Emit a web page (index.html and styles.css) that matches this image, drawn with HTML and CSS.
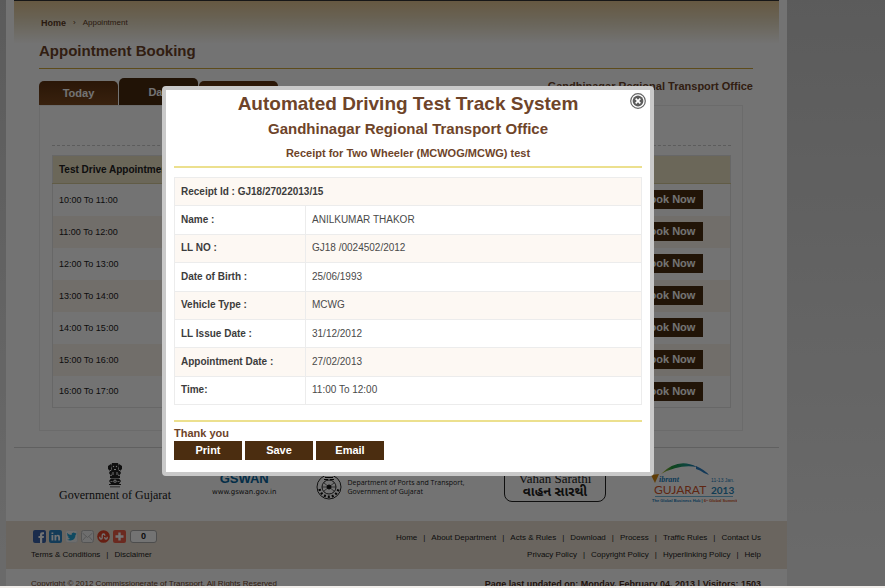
FILE: index.html
```html
<!DOCTYPE html>
<html lang="en">
<head>
<meta charset="utf-8">
<title>Appointment Booking</title>
<link rel="stylesheet" href="styles.css">
</head>
<body>
<div class="window">
  <div class="site">
    <header class="masthead">
      <nav class="breadcrumb" aria-label="Breadcrumb"><a class="home" href="#">Home</a><span>›</span><a href="#">Appointment</a></nav>
    </header>
    <main class="booking">
      <h1>Appointment Booking</h1>
      <div class="tabbar">
        <div class="tabs">
          <button class="tab" type="button">Today</button>
          <button class="tab active" type="button">Day</button>
          <button class="tab" type="button"></button>
        </div>
        <strong class="office">Gandhinagar Regional Transport Office</strong>
      </div>
      <section class="panel">
        <div class="filters"></div>
        <table class="slots">
          <thead><tr><th>Test Drive Appointment</th><th></th></tr></thead>
          <tbody>
            <tr><td>10:00 To 11:00</td><td class="act"><button class="btn" type="button">Book Now</button></td></tr>
            <tr><td>11:00 To 12:00</td><td class="act"><button class="btn" type="button">Book Now</button></td></tr>
            <tr><td>12:00 To 13:00</td><td class="act"><button class="btn" type="button">Book Now</button></td></tr>
            <tr><td>13:00 To 14:00</td><td class="act"><button class="btn" type="button">Book Now</button></td></tr>
            <tr><td>14:00 To 15:00</td><td class="act"><button class="btn" type="button">Book Now</button></td></tr>
            <tr><td>15:00 To 16:00</td><td class="act"><button class="btn" type="button">Book Now</button></td></tr>
            <tr><td>16:00 To 17:00</td><td class="act"><button class="btn" type="button">Book Now</button></td></tr>
          </tbody>
        </table>
      </section>
    </main>
    <section class="partners">
      <div class="gov">
        <svg width="18" height="26" viewBox="0 0 18 26" fill="#222">
          <path d="M6 1h6l1 3-1 3 1 3-1 4H6l-1-4 1-3-1-3z"/>
          <path d="M2 4l3-2v4l1 4-1 4-2-3 1-2-2-2zM16 4l-3-2v4l-1 4 1 4 2-3-1-2 2-2z"/>
          <path d="M4 14h10v2H4zM5 16.500h8l2 2.500-2 3H5l-2-3zM3 22h12v1H3zM4 24.500h10v.8H4z"/>
          <g fill="#fff"><circle cx="7.500" cy="4.500" r=".7"/><circle cx="10.500" cy="4.500" r=".7"/><path d="M8 7h2v1H8zM6.500 10h1v3h-1zM10.500 10h1v3h-1zM4 8h1v1H4zM13 8h1v1h-1z"/><circle cx="9" cy="19.200" r="1.600"/><path d="M4.500 19h2v.8h-2zM11.500 19h2v.8h-2z"/></g>
          <circle cx="9" cy="19.200" r=".7"/>
        </svg>
        <span>Government of Gujarat</span>
      </div>
      <div class="gswan"><b>GSWAN</b><span>www.gswan.gov.in</span></div>
      <div class="dept">
        <svg width="26" height="26" viewBox="0 0 26 26" fill="none" stroke="#111">
          <circle cx="13" cy="13" r="12" stroke-width=".9"/>
          <circle cx="13" cy="13" r="7" stroke-width=".9"/>
          <circle cx="13" cy="13" r="2" fill="#111"/>
          <path d="M6 13h14M8 9l10 8M18 9L8 17" stroke-width=".6"/>
          <path d="M3.500 15A9.700 9.700 0 0 0 22.500 15" stroke-width="2.400" stroke-dasharray="2 2"/>
          <path d="M8 5.500h4M14 5.500h4M9 3.500h8" stroke-width="1.200"/>
        </svg>
        <span>Department of Ports and Transport,<br>Government of Gujarat</span>
      </div>
      <div class="vahan"><span>Vahan Sarathi</span><b lang="gu">વાહન સારથી</b></div>
      <svg class="vibrant" width="88" height="44" viewBox="0 0 88 44" role="img" aria-label="Vibrant Gujarat 2013">
        <defs><linearGradient id="arc"><stop offset="0" stop-color="#d8c030"/><stop offset=".3" stop-color="#1f9a3c"/><stop offset=".7" stop-color="#1f9a8c"/><stop offset="1" stop-color="#1c6fc0"/></linearGradient></defs>
        <path d="M12 12Q29-5 48 5Q30 2 12 12z" fill="url(#arc)"/>
        <path d="M47 4Q56 8 60 13L55 11Q51 8 47 7z" fill="#2b7fc4"/>
        <path d="M2 13l8-1-4 9z" fill="#d78a10"/>
        <text class="v-script" x="10" y="20">ibrant</text>
        <text class="v-date" x="62" y="20">11-13 Jan.</text>
        <text class="v-name" x="5" y="32">GUJARAT</text>
        <text class="v-year" x="62" y="32">2013</text>
        <path d="M6 34.500h78" stroke="#3a9ac8" stroke-width=".7"/>
        <text class="v-tag" x="3" y="40">The Global Business Hub | <tspan fill="#d2562c">6<tspan class="v-sup" dy="-1">th</tspan><tspan dy="1"> Global Summit</tspan></tspan></text>
      </svg>
    </section>
    <footer class="footer">
      <div class="left">
        <div class="social">
          <a href="#" aria-label="Facebook"><svg viewBox="0 0 13 13"><rect width="13" height="13" rx="2" fill="#3b62a8"/><path d="M7 13V8H5.500V6H7V4.500Q7 2.300 9.200 2.300H11v2H9.700Q9.200 4.300 9.200 5v1H11l-.3 2H9.200v5z" fill="#fff"/></svg></a>
          <a href="#" aria-label="LinkedIn"><svg viewBox="0 0 13 13"><rect width="13" height="13" rx="2" fill="#2a84c4"/><path d="M2.500 5h1.800v5.500H2.500zM2.500 2.500h1.800v1.600H2.500zM5.500 5h1.700v.8Q7.800 4.800 9 4.800q2 0 2 2.400v3.300H9.200v-3q0-1.200-.9-1.200-1 0-1 1.200v3H5.500z" fill="#fff"/></svg></a>
          <a href="#" aria-label="Twitter"><svg viewBox="0 0 13 13"><rect x=".5" y=".5" width="12" height="12" rx="2" fill="#f2f2f2" stroke="#ddd"/><path d="M2 3q2 2 4.500 2Q6.300 2.600 8.500 2.500q1 0 1.600.7l1.400-.5-.8 1.300 1-.2-1.200 1.300Q10.300 10.500 5.500 10.500 3.500 10.500 2 9.600q2 0 3-.9-1.600-.2-2-1.600h1Q2.200 6.400 2.300 5l.8.200Q1.500 4.300 2 3z" fill="#22a4d8"/></svg></a>
          <a href="#" aria-label="Email"><svg viewBox="0 0 13 13"><rect x=".5" y=".5" width="12" height="12" rx="2" fill="#f4f4f4" stroke="#bbb"/><path d="M1.500 3l5 4.500 5-4.500M1.500 10.500l3.500-4M11.500 10.500L8 6.500" fill="none" stroke="#b4b4b4" stroke-width=".8"/></svg></a>
          <a href="#" aria-label="StumbleUpon"><svg viewBox="0 0 13 13"><circle cx="6.500" cy="6.500" r="6.300" fill="#e2452a"/><path d="M2.800 6.800v1Q2.800 9 4 9t1.200-1.200V5.200Q5.200 4 6.500 4t1.300 1.200v.5M7.800 7v.8Q7.800 9 9 9t1.200-1.200v-1" fill="none" stroke="#fff" stroke-width="1.300"/></svg></a>
          <a href="#" aria-label="Share"><svg viewBox="0 0 13 13"><rect width="13" height="13" rx="2" fill="#ee5d48"/><path d="M5.300 2.500h2.400v2.800h2.800v2.400H7.700v2.800H5.300V7.700H2.500V5.300h2.800z" fill="#fff"/></svg></a>
          <span class="count">0</span>
        </div>
        <nav class="links"><a href="#">Terms &amp; Conditions</a><i>|</i><a href="#">Disclaimer</a></nav>
      </div>
      <div class="right">
        <nav class="links"><a href="#">Home</a><i>|</i><a href="#">About Department</a><i>|</i><a href="#">Acts &amp; Rules</a><i>|</i><a href="#">Download</a><i>|</i><a href="#">Process</a><i>|</i><a href="#">Traffic Rules</a><i>|</i><a href="#">Contact Us</a></nav>
        <nav class="links"><a href="#">Privacy Policy</a><i>|</i><a href="#">Copyright Policy</a><i>|</i><a href="#">Hyperlinking Policy</a><i>|</i><a href="#">Help</a></nav>
      </div>
    </footer>
    <div class="legal"><span>Copyright © 2012 Commissionerate of Transport. All Rights Reserved</span><b>Page last updated on: Monday, February 04, 2013 | Visitors: 1503</b></div>
  </div>
  <div class="overlay">
    <section class="modal" role="dialog" aria-labelledby="receipt-title">
      <button class="close" type="button" aria-label="Close">
        <svg width="16" height="16" viewBox="0 0 16 16"><circle cx="8" cy="8" r="7.300" fill="#fff" stroke="#666" stroke-width="1.200"/><circle cx="8" cy="8" r="5.400" fill="#5c5c5c"/><path d="M5.700 5.700l4.600 4.600M10.300 5.700l-4.600 4.600" stroke="#fff" stroke-width="1.700"/></svg>
      </button>
      <div class="heading">
        <h2 id="receipt-title">Automated Driving Test Track System</h2>
        <h3>Gandhinagar Regional Transport Office</h3>
        <h4>Receipt for Two Wheeler (MCWOG/MCWG) test</h4>
      </div>
      <table class="receipt">
        <tbody>
          <tr><th colspan="2">Receipt Id : GJ18/27022013/15</th></tr>
          <tr><th>Name :</th><td>ANILKUMAR THAKOR</td></tr>
          <tr><th>LL NO :</th><td>GJ18 /0024502/2012</td></tr>
          <tr><th>Date of Birth :</th><td>25/06/1993</td></tr>
          <tr><th>Vehicle Type :</th><td>MCWG</td></tr>
          <tr><th>LL Issue Date :</th><td>31/12/2012</td></tr>
          <tr><th>Appointment Date :</th><td>27/02/2013</td></tr>
          <tr><th>Time:</th><td>11:00 To 12:00</td></tr>
        </tbody>
      </table>
      <div class="closing">
        <p>Thank you</p>
        <div class="actions"><button class="btn" type="button">Print</button><button class="btn" type="button">Save</button><button class="btn" type="button">Email</button></div>
      </div>
    </section>
  </div>
</div>
</body>
</html>
```
FILE: styles.css
```css
* { box-sizing: border-box; }
body {
  margin: 0;
  background: #f1eeeb;
  color: #3c3c3c;
  font: 9px/12px "Liberation Sans", Arial, sans-serif;
}
h1, h2, h3, h4, p { margin: 0; }
a { color: inherit; text-decoration: none; }
button { font-family: inherit; border: 0; padding: 0; }
table { width: 100%; border-collapse: collapse; text-align: left; }
svg { display: block; }

.window {
  position: relative;
  height: calc(100vh - 2px);
  overflow: hidden;
  background: linear-gradient(#cbcbcb, #ececec);
}
.site { margin: 0 98px 0 6px; background: #fff; }

.masthead {
  height: 44px;
  margin: 0 8px;
  padding: 16px 27px 0;
  border-top: 1px solid #333;
  background: linear-gradient(#e2c491, #e8dcc0 45%, #fff);
}
.breadcrumb { display: flex; gap: 7px; font-size: 8px; color: #5b3a24; }
.breadcrumb .home { font-size: 9px; font-weight: bold; }

.booking { padding: 0 34px 16px 33px; color: #222; }
.booking h1 {
  height: 25px;
  border-bottom: 1px solid #cfa63c;
  color: #6e4429;
  font-size: 15px;
  line-height: 14px;
}
.tabbar { display: flex; justify-content: space-between; height: 36px; }
.tabs { display: flex; align-items: flex-end; gap: 1px; }
.tab {
  width: 79px;
  height: 24px;
  border-radius: 5px 5px 0 0;
  background: linear-gradient(#5f3210, #7d4a20);
  color: #fff;
  font-size: 11px;
  font-weight: bold;
}
.tab.active { height: 27px; background: #4b2a0e; }
.office { padding-top: 11px; color: #6e4429; font-size: 11px; }
.panel {
  margin-right: 10px;
  padding: 0 11px 22px 12px;
  border: 1px solid #ededed;
}
.filters { height: 40px; margin-bottom: 9px; border-bottom: 1px dashed #ccc; }
.slots { border: 1px solid #e4e4e4; }
.slots th {
  height: 28px;
  padding: 0 6px;
  border-bottom: 1px solid #d8cc9c;
  background: #ede4c6;
  font-size: 10px;
}
.slots td { height: 32px; padding: 0 6px; }
.slots tr:nth-child(even) td { background: #fbf3ec; }
.slots .act { width: 102px; }
.btn {
  width: 68px;
  height: 19px;
  background: #4b2d10;
  color: #fff;
  font-size: 11px;
  font-weight: bold;
  line-height: 19px;
}
.slots .btn { display: block; }

.partners {
  display: flex;
  align-items: flex-start;
  height: 74px;
  margin: 0 8px;
  padding: 14px 42px 0 45px;
  border-top: 1px solid #d4d4d4;
  color: #222;
}
.gov { display: flex; flex-direction: column; align-items: center; font: 12px/14px "Liberation Serif", serif; }
.gov span { white-space: nowrap; }
.gswan { display: flex; flex-direction: column; align-items: center; margin: 9px 0 0 41px; font: 7px/10px "DejaVu Sans", sans-serif; }
.gswan b { color: #08669f; font: bold 13px/16px "Liberation Sans", sans-serif; }
.dept { display: flex; align-items: center; gap: 5px; margin: 12px auto 0 40px; font: 7px/9px "Open Sans", sans-serif; white-space: nowrap; }
.vahan {
  display: flex;
  flex-direction: column;
  align-items: center;
  width: 102px;
  height: 40px;
  margin-right: 43px;
  padding-top: 9px;
  border: 1px solid #222;
  border-radius: 8px;
  font: 13px/14px "Liberation Serif", serif;
}
.vahan b { font: bold 13px/14px "Noto Sans Gujarati", "Noto Sans", sans-serif; }
.vibrant { flex: none; }
.v-script { font: italic bold 8px "Liberation Serif", serif; fill: #1a7fc0; }
.v-date { font: 5px "Liberation Sans", sans-serif; fill: #1a7fc0; }
.v-name { font: 12px Lato, sans-serif; fill: #d2562c; }
.v-year { font: bold 10px Lato, sans-serif; fill: #2a86b8; }
.v-tag { font: bold 4px "Liberation Sans", sans-serif; fill: #1a7fc0; }
.v-sup { font-size: 2px; }

.footer {
  display: flex;
  justify-content: space-between;
  height: 48px;
  padding: 9px 26px 0 25px;
  background: #ebe1d2;
  color: #222;
}
.links { display: flex; gap: 6px; font-size: 8px; line-height: 10px; }
.links i { font-style: normal; }
.right { display: flex; flex-direction: column; align-items: flex-end; gap: 7px; padding-top: 3px; }
.social { display: flex; gap: 3px; margin: 0 0 7px 2px; }
.social svg { width: 13px; height: 13px; }
.count {
  width: 27px;
  height: 13px;
  margin-left: 1px;
  border: 1px solid #aaa;
  border-radius: 3px;
  background: #fff;
  font-weight: bold;
  line-height: 11px;
  text-align: center;
}
.legal { display: flex; justify-content: space-between; padding: 9px 26px 8px 25px; color: #6e4429; }
.legal span { font-size: 8px; }
.legal b { color: #4b2d1c; }

.overlay { position: absolute; inset: 0; padding: 86px 162px; background: rgba(0, 0, 0, .55); }
.modal {
  position: relative;
  max-width: 492px;
  min-width: 492px;
  padding: 0 8px 12px;
  border: 4px solid #c9c9c9;
  border-radius: 4px;
  background: #fff;
}
.close { position: absolute; top: 3px; right: 4px; background: none; }
.heading { border-bottom: 2px solid #ece08e; color: #6e4429; text-align: center; }
h2 { font-size: 19px; line-height: 28px; }
h3 { font-size: 15px; line-height: 22px; }
h4 { font-size: 11px; line-height: 26px; }
.receipt { height: 228px; margin: 9px 0 15px; font-size: 10px; }
.receipt th, .receipt td { padding: 0 6px; border: 1px solid #ececec; }
.receipt th { width: 131px; }
.receipt td { color: #4a4a4a; }
.receipt tr:nth-child(odd) { background: #fdf8f3; }
.closing { padding-top: 4px; border-top: 2px solid #ece08e; color: #6e4429; }
.closing p { font-size: 11px; font-weight: bold; line-height: 15px; }
.actions { display: flex; gap: 3px; }
```
